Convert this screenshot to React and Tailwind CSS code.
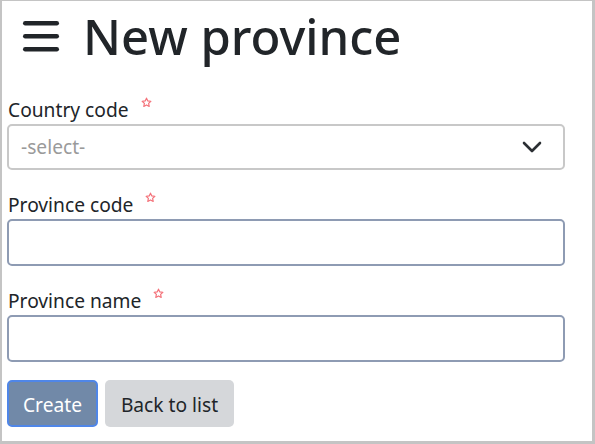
import { useState } from 'react'

function Star() {
  return (
    <svg width="11" height="11" viewBox="0 0 24 24" className="ml-[12px] mt-[-14px] shrink-0" fill="none" stroke="#f4727a" strokeWidth="2.6" strokeLinejoin="round">
      <path d="M12 2.5l2.9 6.1 6.6.8-4.9 4.6 1.3 6.6L12 17.3l-5.9 3.3 1.3-6.6-4.9-4.6 6.6-.8z" />
    </svg>
  )
}

function Field({ label, children }) {
  return (
    <div className="mb-[20px]">
      <label className="flex items-center h-[29px] text-[19.2px] leading-[29px] text-[#212529] pl-px">
        {label}
        <Star />
      </label>
      {children}
    </div>
  )
}

export default function App() {
  const [country, setCountry] = useState('')
  const [code, setCode] = useState('')
  const [name, setName] = useState('')

  return (
    <div
      className="w-[595px] h-[444px] bg-white border-t border-l-2 border-r-[3px] border-b-[3px] border-[#c4c4c4] pl-[5px] overflow-hidden"
      style={{ fontFamily: '"Noto Sans", "Open Sans", sans-serif' }}
    >
      {/* Header */}
      <div className="flex items-center mt-[5px] h-[58px]">
        <svg width="38" height="32" viewBox="0 0 38 32" className="ml-[15px] mr-[23px] mt-[2px]">
          <rect x="1" y="1" width="36" height="4.5" rx="2.2" fill="#212529" />
          <rect x="1" y="14" width="36" height="4.5" rx="2.2" fill="#212529" />
          <rect x="1" y="27" width="36" height="4.5" rx="2.2" fill="#212529" />
        </svg>
        <h1 className="text-[49px] leading-[58px] font-medium text-[#212529] mt-[2px]">New province</h1>
      </div>

      <div className="mt-[31px] w-[558px]">
        <Field label="Country code">
          <div className="relative">
            <select
              value={country}
              onChange={e => setCountry(e.target.value)}
              className="w-full h-[46px] appearance-none rounded-[5px] border-2 border-[#c8c8c8] bg-white pl-[12px] text-[19.2px] text-[#9a9a9a] outline-none"
            >
              <option value="">-select-</option>
            </select>
            <svg width="22" height="14" viewBox="0 0 22 14" className="absolute right-[22px] top-[16px] pointer-events-none" fill="none" stroke="#2b2f33" strokeWidth="2.6" strokeLinecap="round" strokeLinejoin="round">
              <path d="M3 3l8 8 8-8" />
            </svg>
          </div>
        </Field>

        <Field label="Province code">
          <input
            value={code}
            onChange={e => setCode(e.target.value)}
            className="block w-full h-[47px] rounded-[5px] border-2 border-[#8e9bb3] bg-white px-[12px] text-[19.2px] outline-none"
          />
        </Field>

        <Field label="Province name">
          <input
            value={name}
            onChange={e => setName(e.target.value)}
            className="block w-full h-[47px] rounded-[5px] border-2 border-[#8e9bb3] bg-white px-[12px] text-[19.2px] outline-none"
          />
        </Field>

        <div className="flex gap-[7px] mt-[-2px]">
          <button className="w-[91px] h-[47px] rounded-[5px] bg-[#7189a8] border-2 border-[#4f86e8] text-white text-[19.2px] pt-[3px]">
            Create
          </button>
          <button className="w-[129px] h-[47px] rounded-[5px] bg-[#d5d7da] text-[#212529] text-[19.2px] pt-[3px]">
            Back to list
          </button>
        </div>
      </div>
    </div>
  )
}
